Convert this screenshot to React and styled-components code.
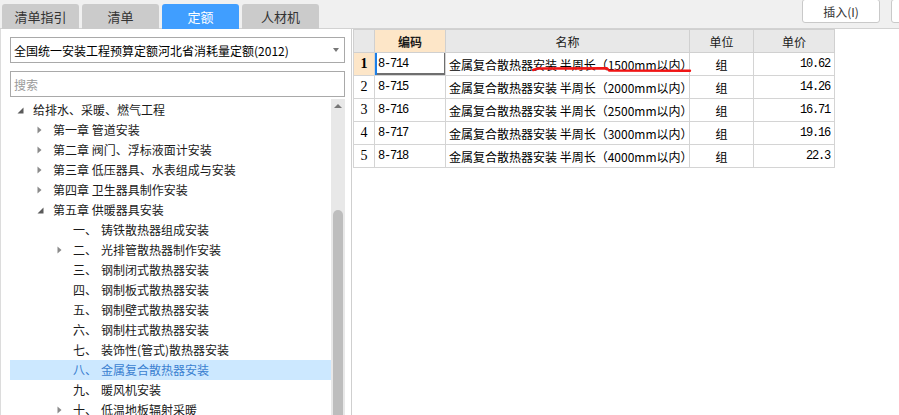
import React from "react";
import styled, { createGlobalStyle } from "styled-components";

const GlobalStyle = createGlobalStyle`
  html, body, #root {
    margin: 0;
    padding: 0;
    height: 100%;
    background: #ffffff;
  }
  body {
    font-family: "Noto Sans CJK SC", "Noto Sans", sans-serif;
    font-size: 12px;
    color: #1a1a1a;
    overflow: hidden;
  }
`;

const Page = styled.div`
  display: flex;
  flex-direction: column;
  height: 415px;
  width: 899px;
  overflow: hidden;
`;

const TopBar = styled.div`
  display: flex;
  align-items: flex-end;
  height: 29px;
  box-sizing: border-box;
  padding-left: 2px;
  background: #f0f0f0;
  border-bottom: 1px solid #d2d2d2;
`;

const Tabs = styled.div`
  display: flex;
  gap: 3px;
  margin-bottom: -1px;
`;

const Tab = styled.div`
  width: 77px;
  height: 25px;
  display: flex;
  align-items: center;
  justify-content: center;
  border-radius: 3px 3px 0 0;
  font-size: 13px;
  background: ${(p) => (p.$active ? "#409eff" : "#cbcbcb")};
  color: ${(p) => (p.$active ? "#ffffff" : "#333333")};
`;

const Tools = styled.div`
  display: flex;
  gap: 11px;
  margin-left: auto;
  align-self: flex-start;
  margin-top: -1px;
  margin-right: -70px;
`;

const ToolButton = styled.div`
  width: 78px;
  height: 24px;
  box-sizing: border-box;
  display: flex;
  align-items: center;
  justify-content: center;
  background: #ffffff;
  border: 1px solid #c9c9c9;
  border-radius: 3px;
  font-size: 12px;
  color: #333;
`;

const Body = styled.div`
  flex: 1;
  display: flex;
  min-height: 0;
`;

const LeftPanel = styled.div`
  width: 352px;
  flex: none;
  box-sizing: border-box;
  border-left: 1px solid #dcdcdc;
  border-right: 1px solid #cfcfcf;
  padding: 8px 6px 0 9px;
  display: flex;
  flex-direction: column;
`;

const Select = styled.div`
  height: 26px;
  box-sizing: border-box;
  border: 1px solid #a9a9a9;
  display: flex;
  align-items: center;
  justify-content: space-between;
  padding: 0 5px 0 3px;
  font-size: 12px;
  color: #000;
  white-space: nowrap;
`;

const Caret = styled.span`
  width: 0;
  height: 0;
  border-left: 3.5px solid transparent;
  border-right: 3.5px solid transparent;
  border-top: 4px solid #777;
`;

const Search = styled.input`
  margin-top: 8px;
  height: 26px;
  box-sizing: border-box;
  border: 1px solid #a9a9a9;
  padding: 0 3px;
  font-family: "Noto Sans CJK SC", sans-serif;
  font-size: 12px;
  outline: none;
  &::placeholder {
    color: #9a9a9a;
  }
`;

const TreeWrap = styled.div`
  margin-top: 2px;
  flex: 1;
  display: flex;
  min-height: 0;
  overflow: hidden;
`;

const TreeList = styled.div`
  flex: 1;
  padding-top: 1px;
`;

const Row = styled.div`
  height: 20px;
  display: flex;
  align-items: center;
  padding-left: ${(p) => p.$level * 20}px;
  background: ${(p) => (p.$selected ? "#cce8ff" : "transparent")};
  color: ${(p) => (p.$selected ? "#3a7fd0" : "#1a1a1a")};
  white-space: nowrap;
  line-height: 20px;
`;

const Toggle = styled.span`
  width: 23px;
  flex: none;
  display: flex;
  align-items: center;
  padding-left: 7px;
  box-sizing: border-box;
`;

const Num = styled.span`
  width: 28px;
  flex: none;
`;

const ScrollBar = styled.div`
  width: 14px;
  flex: none;
  background: #e8e8e8;
  display: flex;
  flex-direction: column;
  align-items: center;
`;

const ScrollUp = styled.div`
  height: 14px;
  display: flex;
  align-items: center;
  justify-content: center;
  &::before {
    content: "";
    border-left: 4px solid transparent;
    border-right: 4px solid transparent;
    border-bottom: 4px solid #777;
  }
`;

const Thumb = styled.div`
  margin-top: 97px;
  width: 10px;
  flex: 1;
  background: #bdbdbd;
  border-radius: 5px 5px 0 0;
`;

const RightPanel = styled.div`
  flex: 1;
  position: relative;
  padding-left: 1px;
`;

const Grid = styled.table`
  border-collapse: collapse;
  table-layout: fixed;
  width: 481px;
  font-size: 12px;
`;

const Th = styled.th`
  height: 22px;
  padding: 0;
  border: 1px solid #d0d0d0;
  background: ${(p) => (p.$active ? "#fde6c8" : "#e8e8e8")};
  font-weight: ${(p) => (p.$active ? 700 : 400)};
  font-size: 12px;
  color: #1a1a1a;
  text-align: center;
`;

const Td = styled.td`
  height: 22px;
  padding: 0 3px;
  border: 1px solid #d4d4d4;
  white-space: nowrap;
  overflow: hidden;
  text-align: ${(p) => p.$align || "left"};
  color: #000;
`;

const RowNum = styled(Td)`
  padding: 0;
  text-align: center;
  font-family: "Liberation Serif", serif;
  font-size: 14px;
  font-weight: ${(p) => (p.$active ? 700 : 400)};
  background: ${(p) => (p.$active ? "#fde6c8" : "#ffffff")};
`;

const CodeCell = styled(Td)`
  font-family: "Liberation Mono", monospace;
  letter-spacing: -1.2px;
  font-size: 12px;
  box-shadow: ${(p) =>
    p.$selected
      ? "inset 2px 0 0 #1b7fe8, inset -1px 0 0 #6f6f6f, inset 0 -2px 0 #6f6f6f"
      : "none"};
`;

const PriceCell = styled(Td)`
  font-family: "Liberation Mono", monospace;
  letter-spacing: -1.2px;
  text-align: right;
  padding-right: 4px;
`;

const Mark = styled.svg`
  position: absolute;
  left: 178px;
  top: 36px;
`;

const Expanded = () => (
  <svg width="7" height="7" viewBox="0 0 7 7">
    <path d="M6.5 0.5 L6.5 6.5 L0.5 6.5 Z" fill="#5a5a5a" />
  </svg>
);

const Collapsed = () => (
  <svg width="5" height="8" viewBox="0 0 5 8">
    <path d="M0.5 0.5 L4.5 4 L0.5 7.5 Z" fill="#8a8a8a" />
  </svg>
);

const tree = [
  { level: 0, state: "open", text: "给排水、采暖、燃气工程" },
  { level: 1, state: "closed", text: "第一章 管道安装" },
  { level: 1, state: "closed", text: "第二章 阀门、浮标液面计安装" },
  { level: 1, state: "closed", text: "第三章 低压器具、水表组成与安装" },
  { level: 1, state: "closed", text: "第四章 卫生器具制作安装" },
  { level: 1, state: "open", text: "第五章 供暖器具安装" },
  { level: 2, num: "一、", text: "铸铁散热器组成安装" },
  { level: 2, state: "closed", num: "二、", text: "光排管散热器制作安装" },
  { level: 2, num: "三、", text: "钢制闭式散热器安装" },
  { level: 2, num: "四、", text: "钢制板式散热器安装" },
  { level: 2, num: "五、", text: "钢制壁式散热器安装" },
  { level: 2, num: "六、", text: "钢制柱式散热器安装" },
  { level: 2, num: "七、", text: "装饰性(管式)散热器安装" },
  { level: 2, num: "八、", text: "金属复合散热器安装", selected: true },
  { level: 2, num: "九、", text: "暖风机安装" },
  { level: 2, state: "closed", num: "十、", text: "低温地板辐射采暖" },
];

const rows = [
  { code: "8-714", size: "1500", price: "10.62" },
  { code: "8-715", size: "2000", price: "14.26" },
  { code: "8-716", size: "2500", price: "16.71" },
  { code: "8-717", size: "3000", price: "19.16" },
  { code: "8-718", size: "4000", price: "22.3" },
];

export default function App() {
  return (
    <Page>
      <GlobalStyle />
      <TopBar>
        <Tabs>
          <Tab>清单指引</Tab>
          <Tab>清单</Tab>
          <Tab $active>定额</Tab>
          <Tab>人材机</Tab>
        </Tabs>
        <Tools>
          <ToolButton>插入(I)</ToolButton>
          <ToolButton />
        </Tools>
      </TopBar>
      <Body>
        <LeftPanel>
          <Select>
            <span>全国统一安装工程预算定额河北省消耗量定额(2012)</span>
            <Caret />
          </Select>
          <Search placeholder="搜索" />
          <TreeWrap>
            <TreeList>
              {tree.map((item, i) => (
                <Row key={i} $level={item.level} $selected={item.selected}>
                  <Toggle>
                    {item.state === "open" && <Expanded />}
                    {item.state === "closed" && <Collapsed />}
                  </Toggle>
                  {item.num && <Num>{item.num}</Num>}
                  <span>{item.text}</span>
                </Row>
              ))}
            </TreeList>
            <ScrollBar>
              <ScrollUp />
              <Thumb />
            </ScrollBar>
          </TreeWrap>
        </LeftPanel>
        <RightPanel>
          <Grid>
            <colgroup>
              <col style={{ width: 21 }} />
              <col style={{ width: 71 }} />
              <col style={{ width: 244 }} />
              <col style={{ width: 64 }} />
              <col style={{ width: 81 }} />
            </colgroup>
            <thead>
              <tr>
                <Th />
                <Th $active>编码</Th>
                <Th>名称</Th>
                <Th>单位</Th>
                <Th>单价</Th>
              </tr>
            </thead>
            <tbody>
              {rows.map((r, i) => (
                <tr key={r.code}>
                  <RowNum $active={i === 0}>{i + 1}</RowNum>
                  <CodeCell $selected={i === 0}>{r.code}</CodeCell>
                  <Td>金属复合散热器安装 半周长（{r.size}mm以内）</Td>
                  <Td $align="center">组</Td>
                  <PriceCell>{r.price}</PriceCell>
                </tr>
              ))}
            </tbody>
          </Grid>
          <Mark width="164" height="10" viewBox="0 0 164 10">
            <path
              d="M3 5 L8 3.5 L77 3.3 L79 5.5 L160 5.8"
              fill="none"
              stroke="#f01515"
              strokeWidth="2.4"
              strokeLinecap="round"
              strokeLinejoin="round"
            />
          </Mark>
        </RightPanel>
      </Body>
    </Page>
  );
}
